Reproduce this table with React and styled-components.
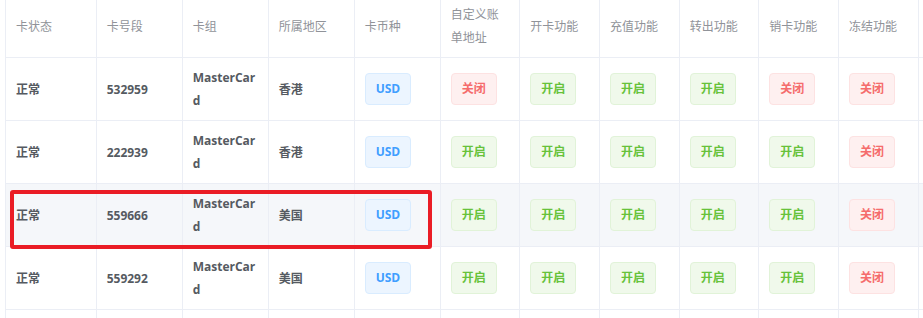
import React from "react";
import styled, { createGlobalStyle } from "styled-components";

const Global = createGlobalStyle`
  html, body { margin: 0; padding: 0; background: #fff; }
  body { font-family: "Open Sans", "Noto Sans CJK SC", sans-serif; overflow: hidden; }
`;

const Page = styled.div`
  position: relative;
  width: 923px;
  height: 318px;
  overflow: hidden;
`;

const Scroller = styled.div`
  margin: -5px 0 0 5px;
`;

const Table = styled.table`
  table-layout: fixed;
  border-collapse: separate;
  border-spacing: 0;
  border-left: 1px solid #ebeef5;
  width: ${(p) => p.$width}px;
  font-size: 12px;
`;

const HeadCell = styled.th`
  padding: 8px 10px;
  border-right: 1px solid #ebeef5;
  border-bottom: 1px solid #ebeef5;
  text-align: left;
  font-weight: 400;
  color: #909399;
  line-height: 23px;
  vertical-align: middle;
  word-break: break-all;
`;

const Row = styled.tr`
  background: ${(p) => (p.$hover ? "#f5f7fa" : "#fff")};
`;

const Cell = styled.td`
  padding: 8px 10px;
  height: 46px;
  border-right: 1px solid #ebeef5;
  border-bottom: 1px solid #ebeef5;
  color: #555a61;
  font-weight: 700;
  line-height: 23px;
  vertical-align: middle;
  word-break: break-all;
`;

const tagColors = {
  blue: { bg: "#ecf5ff", bd: "#d9ecff", fg: "#409eff" },
  green: { bg: "#f0f9eb", bd: "#e1f3d8", fg: "#67c23a" },
  red: { bg: "#fef0f0", bd: "#fde2e2", fg: "#f56c6c" },
};

const Tag = styled.span`
  display: inline-block;
  box-sizing: border-box;
  height: 32px;
  line-height: 30px;
  padding: 0 10px;
  border-radius: 4px;
  font-size: 12px;
  font-weight: 700;
  white-space: nowrap;
  background: ${(p) => tagColors[p.$tone].bg};
  border: 1px solid ${(p) => tagColors[p.$tone].bd};
  color: ${(p) => tagColors[p.$tone].fg};
  vertical-align: middle;
`;

const Highlight = styled.div`
  position: absolute;
  left: 10px;
  top: 190px;
  width: 422px;
  height: 59px;
  box-sizing: border-box;
  border: 4px solid #ea1c25;
  border-radius: 3px;
  pointer-events: none;
`;

const widths = [90.67, 86, 86, 86, 86, 79.67, 79.67, 79.67, 79.67, 79.67, 79.67, 79.67];
const headers = [
  "卡状态",
  "卡号段",
  "卡组",
  "所属地区",
  "卡币种",
  "自定义账单地址",
  "开卡功能",
  "充值功能",
  "转出功能",
  "销卡功能",
  "冻结功能",
  "",
];

const rows = [
  { status: "正常", bin: "532959", group: "MasterCard", region: "香港", cur: "USD", flags: [0, 1, 1, 1, 0, 0] },
  { status: "正常", bin: "222939", group: "MasterCard", region: "香港", cur: "USD", flags: [1, 1, 1, 1, 1, 0] },
  { status: "正常", bin: "559666", group: "MasterCard", region: "美国", cur: "USD", flags: [1, 1, 1, 1, 1, 0], hover: true },
  { status: "正常", bin: "559292", group: "MasterCard", region: "美国", cur: "USD", flags: [1, 1, 1, 1, 1, 0] },
];

export default function App() {
  const total = widths.reduce((a, b) => a + b, 0);
  return (
    <Page>
      <Global />
      <Scroller>
        <Table $width={total}>
          <colgroup>
            {widths.map((w, i) => (
              <col key={i} style={{ width: w }} />
            ))}
          </colgroup>
          <thead>
            <tr>
              {headers.map((h, i) => (
                <HeadCell key={i}>{h}</HeadCell>
              ))}
            </tr>
          </thead>
          <tbody>
            {rows.map((r) => (
              <Row key={r.bin} $hover={r.hover}>
                <Cell>{r.status}</Cell>
                <Cell>{r.bin}</Cell>
                <Cell>{r.group}</Cell>
                <Cell>{r.region}</Cell>
                <Cell>
                  <Tag $tone="blue">{r.cur}</Tag>
                </Cell>
                {r.flags.map((f, i) => (
                  <Cell key={i}>
                    <Tag $tone={f ? "green" : "red"}>{f ? "开启" : "关闭"}</Tag>
                  </Cell>
                ))}
                <Cell />
              </Row>
            ))}
            <Row>
              {widths.map((_, i) => (
                <Cell key={i} />
              ))}
            </Row>
          </tbody>
        </Table>
      </Scroller>
      <Highlight />
    </Page>
  );
}
